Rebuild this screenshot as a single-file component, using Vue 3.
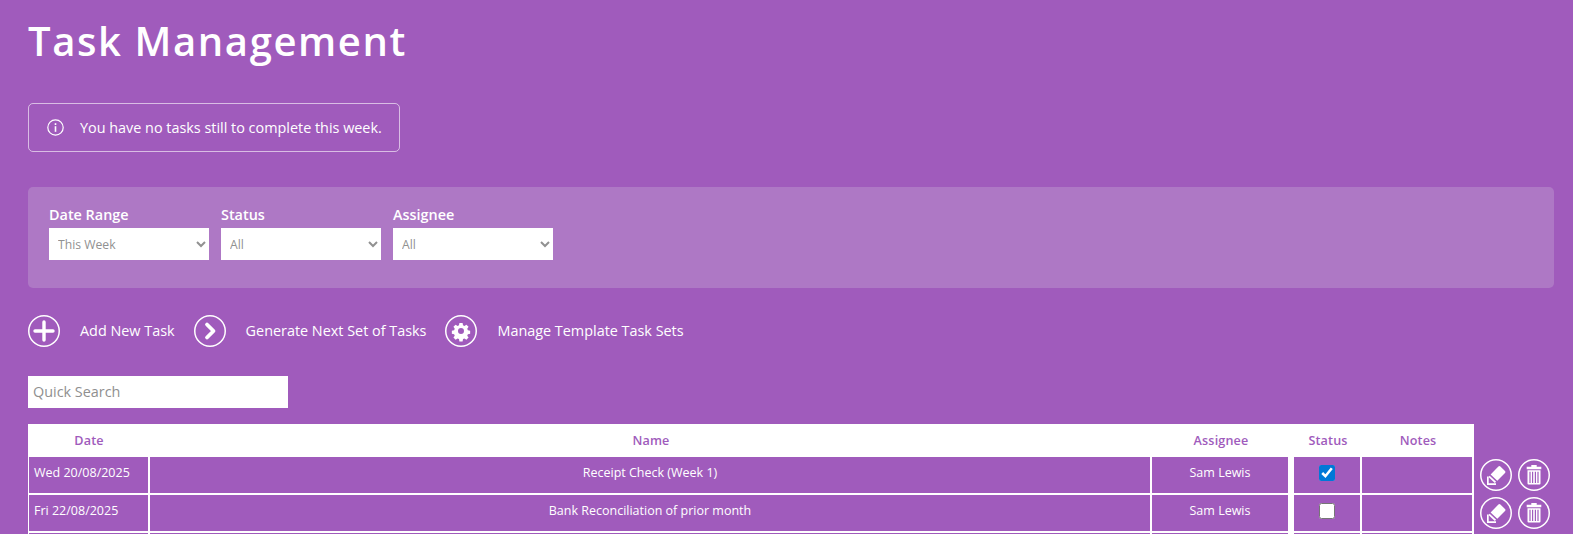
<template>
  <div class="page">
    <h1 class="title">Task Management</h1>

    <div class="notice">
      <svg class="notice-icon" viewBox="0 0 17 17" width="17" height="17">
        <circle cx="8.5" cy="8.5" r="7.7" fill="none" stroke="currentColor" stroke-width="1.2" />
        <rect x="7.7" y="7.2" width="1.6" height="5.6" fill="currentColor" />
        <rect x="7.7" y="4.2" width="1.6" height="1.8" fill="currentColor" />
      </svg>
      <span>You have no tasks still to complete this week.</span>
    </div>

    <div class="filters">
      <div v-for="filter in filters" :key="filter.label" class="filter">
        <label class="filter-label">{{ filter.label }}</label>
        <select class="filter-select">
          <option>{{ filter.value }}</option>
        </select>
      </div>
    </div>

    <div class="actions">
      <a class="action">
        <svg class="round-icon" viewBox="0 0 32 32">
          <circle cx="16" cy="16" r="15.25" class="ring" />
          <path d="M16 7v18M7 16h18" fill="none" stroke="#fff" stroke-width="3.4" stroke-linecap="round" />
        </svg>
        <span class="action-text">Add New Task</span>
      </a>
      <a class="action">
        <svg class="round-icon" viewBox="0 0 32 32">
          <circle cx="16" cy="16" r="15.25" class="ring" />
          <path d="M13 9.5l6.5 6.5-6.5 6.5" fill="none" stroke="#fff" stroke-width="3.8" stroke-linecap="round" stroke-linejoin="round" />
        </svg>
        <span class="action-text">Generate Next Set of Tasks</span>
      </a>
      <a class="action">
        <svg class="round-icon" viewBox="0 0 32 32">
          <circle cx="16" cy="16" r="15.25" class="ring" />
          <path
            fill="#fff"
            fill-rule="evenodd"
            d="M14.2 7h3.6l.5 2.6 1.6.7 2.2-1.5 2.5 2.5-1.5 2.2.7 1.6 2.6.5v3.6l-2.6.5-.7 1.6 1.5 2.2-2.5 2.5-2.2-1.5-1.6.7-.5 2.6h-3.6l-.5-2.6-1.6-.7-2.2 1.5-2.5-2.5 1.5-2.2-.7-1.6-2.6-.5v-3.6l2.6-.5.7-1.6-1.5-2.2 2.5-2.5 2.2 1.5 1.6-.7zM16 12.6a3.4 3.4 0 1 0 0 6.8 3.4 3.4 0 0 0 0-6.8z"
            transform="translate(16 16) scale(.88) translate(-16 -16)"
          />
        </svg>
        <span class="action-text">Manage Template Task Sets</span>
      </a>
    </div>

    <input class="search" type="text" placeholder="Quick Search" />

    <div class="table-wrap">
      <table class="tasks">
        <colgroup>
          <col class="col-date" />
          <col class="col-name" />
          <col class="col-assignee" />
          <col class="col-status" />
          <col class="col-notes" />
        </colgroup>
        <thead>
          <tr>
            <th>Date</th>
            <th>Name</th>
            <th class="assignee">Assignee</th>
            <th>Status</th>
            <th>Notes</th>
          </tr>
        </thead>
        <tbody>
          <tr v-for="task in tasks" :key="task.date">
            <td class="date">{{ task.date }}</td>
            <td>{{ task.name }}</td>
            <td class="assignee">{{ task.assignee }}</td>
            <td><input class="done" type="checkbox" :checked="task.done" /></td>
            <td></td>
          </tr>
          <!-- next row is cut off by the bottom of the window -->
          <tr>
            <td class="date"></td>
            <td></td>
            <td class="assignee"></td>
            <td></td>
            <td></td>
          </tr>
        </tbody>
      </table>

      <div class="row-tools">
        <div v-for="task in tasks" :key="task.date" class="tool-pair">
          <svg class="round-icon" viewBox="0 0 32 32">
            <circle cx="16" cy="16" r="15.25" class="ring" />
            <g fill="#fff">
              <path d="M18.4 7.6a1.4 1.4 0 0 1 2 0l4.6 4.3a1.4 1.4 0 0 1 0 2L17.3 21.8l-6.7-6.3z" />
              <path d="M9.7 16.7l6.4 6-1.3 1.4-6.3-6z" />
              <path d="M7 17.5h1.700v6.800H16V26H7z" />
            </g>
          </svg>
          <svg class="round-icon" viewBox="0 0 32 32">
            <circle cx="16" cy="16" r="15.25" class="ring" />
            <path
              fill="#fff"
              fill-rule="evenodd"
              d="M13.3 6h5.400v1.700h4.600v2.500H8.700V7.700h4.600zM9.500 11.300h13v13.200a1 1 0 0 1-1 1h-11a1 1 0 0 1-1-1zM11.400 12.800v11.200h1.200V12.800zM14 12.800v11.200h1.200V12.800zM16.800 12.800v11.200H18V12.800zM19.400 12.800v11.200h1.200V12.800z"
            />
          </svg>
        </div>
      </div>
    </div>
  </div>
</template>

<script setup>
const filters = [
  { label: 'Date Range', value: 'This Week' },
  { label: 'Status', value: 'All' },
  { label: 'Assignee', value: 'All' }
]

const tasks = [
  { date: 'Wed 20/08/2025', name: 'Receipt Check (Week 1)', assignee: 'Sam Lewis', done: true },
  { date: 'Fri 22/08/2025', name: 'Bank Reconciliation of prior month', assignee: 'Sam Lewis', done: false }
]
</script>

<style>
html,
body {
  margin: 0;
  height: 534px;
  overflow: hidden;
  background: #a05bbc;
}
</style>

<style scoped>
.page {
  box-sizing: border-box;
  height: 534px;
  overflow: hidden;
  padding: 0 19px 0 28px;
  background: #a05bbc;
  color: #fff;
  font-family: "Open Sans", sans-serif;
  font-size: 14.4px;
}

.title {
  box-sizing: border-box;
  height: 103px;
  margin: 0;
  padding-top: 12px;
  font-size: 40px;
  line-height: 57px;
  font-weight: 600;
  letter-spacing: 1.6px;
}

.notice {
  box-sizing: border-box;
  display: inline-flex;
  align-items: center;
  width: 372px;
  height: 49px;
  padding-left: 18px;
  gap: 16px;
  border: 1px solid rgba(255, 255, 255, 0.6);
  border-radius: 5px;
  vertical-align: top;
  color: #fff;
}

.notice-icon {
  flex: none;
}

.filters {
  display: flex;
  gap: 12px;
  box-sizing: border-box;
  height: 101px;
  margin-top: 35px;
  padding: 18px 21px;
  background: #ae78c5;
  border-radius: 5px;
}

.filter {
  display: flex;
  flex-direction: column;
  width: 160px;
}

.filter-label {
  height: 23px;
  font-size: 14.4px;
  line-height: 20px;
  font-weight: 600;
}

.filter-select {
  box-sizing: border-box;
  width: 160px;
  height: 32px;
  padding: 0 4px 0 5px;
  border: 0;
  border-radius: 0;
  background: #fff;
  color: #919191;
  font-family: inherit;
  font-size: 12.2px;
}

.actions {
  display: flex;
  align-items: center;
  height: 32px;
  margin-top: 27px;
}

.action {
  display: flex;
  align-items: center;
  gap: 20px;
  margin-right: 19px;
}

.action-text {
  margin-bottom: 2px;
}

.round-icon {
  display: block;
  flex: none;
  width: 32px;
  height: 32px;
}

.ring {
  fill: none;
  stroke: #fff;
  stroke-width: 1.5;
}

.search {
  display: block;
  box-sizing: border-box;
  width: 260px;
  height: 32px;
  margin-top: 29px;
  padding: 0 5px 2px;
  border: 0;
  border-radius: 0;
  outline: 0;
  background: #fff;
  font-family: inherit;
  font-size: 14.4px;
}

.search::placeholder {
  color: #8f8f8f;
  opacity: 1;
}

.table-wrap {
  display: flex;
  align-items: flex-start;
  margin-top: 16px;
}

.tasks {
  table-layout: fixed;
  width: 1446px;
  border-collapse: separate;
  border-spacing: 0;
  background: #fff;
  font-size: 12.5px;
}

.col-date {
  width: 122px;
}

.col-assignee {
  width: 142px;
}

.col-status {
  width: 68px;
}

.col-notes {
  width: 112px;
}

.tasks th {
  height: 33px;
  padding: 0;
  color: #a05bbc;
  font-weight: 600;
  font-size: 12.6px;
  letter-spacing: 0.15px;
  text-align: center;
  vertical-align: middle;
}

.tasks th.assignee {
  padding-right: 4px;
}

.tasks td {
  box-sizing: border-box;
  height: 38px;
  padding: 7px 5px 0;
  border-right: 2px solid #fff;
  border-bottom: 2px solid #fff;
  background: #a05bbc;
  color: #fff;
  text-align: center;
  vertical-align: top;
}

.tasks td:first-child {
  border-left: 1.5px solid #fff;
}

.tasks td.date {
  text-align: left;
}

.tasks td.assignee {
  border-right-width: 6px;
}

.done {
  display: block;
  width: 16px;
  height: 16px;
  margin: 1px auto 0;
  accent-color: #0078d7;
}

.row-tools {
  flex: none;
  padding: 35px 0 0 6px;
}

.tool-pair {
  display: flex;
  gap: 6px;
  height: 38px;
}
</style>
